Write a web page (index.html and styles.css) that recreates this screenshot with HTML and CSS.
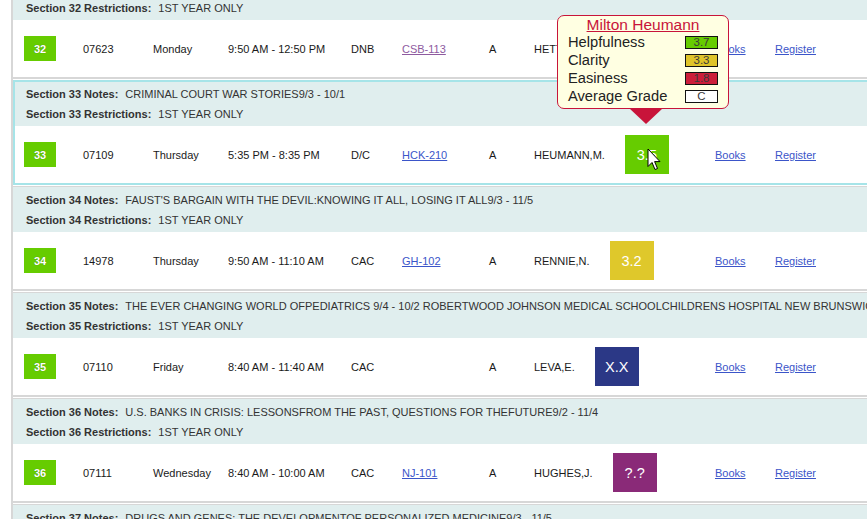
FILE: index.html
```html
<!DOCTYPE html>
<html>
<head>
<meta charset="utf-8">
<title>Sections</title>
<link rel="stylesheet" href="styles.css">
</head>
<body>
<div class="wrap">
  <div class="section">
    <div class="notes first">
      <div class="line"><b>Section 32 Restrictions:</b><span>1ST YEAR ONLY</span></div>
    </div>
    <div class="row">
      <span class="badge">32</span>
      <span>07623</span>
      <span>Monday</span>
      <span>9:50 AM - 12:50 PM</span>
      <span>DNB</span>
      <span><a class="visited" href="#">CSB-113</a></span>
      <span>A</span>
      <span class="inst">HETTLEMAN,K.</span>
      <span><a href="#">Books</a></span>
      <span><a href="#">Register</a></span>
    </div>
  </div>

  <div class="section hover">
    <div class="notes">
      <div class="line"><b>Section 33 Notes:</b><span>CRIMINAL COURT WAR STORIES9/3 - 10/1</span></div>
      <div class="line"><b>Section 33 Restrictions:</b><span>1ST YEAR ONLY</span></div>
    </div>
    <div class="row">
      <span class="badge">33</span>
      <span>07109</span>
      <span>Thursday</span>
      <span>5:35 PM - 8:35 PM</span>
      <span>D/C</span>
      <span><a href="#">HCK-210</a></span>
      <span>A</span>
      <span class="inst">HEUMANN,M.<span class="rating green">3.5</span></span>
      <span><a href="#">Books</a></span>
      <span><a href="#">Register</a></span>
    </div>
  </div>

  <div class="section">
    <div class="notes">
      <div class="line"><b>Section 34 Notes:</b><span>FAUST'S BARGAIN WITH THE DEVIL:KNOWING IT ALL, LOSING IT ALL9/3 - 11/5</span></div>
      <div class="line"><b>Section 34 Restrictions:</b><span>1ST YEAR ONLY</span></div>
    </div>
    <div class="row">
      <span class="badge">34</span>
      <span>14978</span>
      <span>Thursday</span>
      <span>9:50 AM - 11:10 AM</span>
      <span>CAC</span>
      <span><a href="#">GH-102</a></span>
      <span>A</span>
      <span class="inst">RENNIE,N.<span class="rating yellow">3.2</span></span>
      <span><a href="#">Books</a></span>
      <span><a href="#">Register</a></span>
    </div>
  </div>

  <div class="section">
    <div class="notes">
      <div class="line"><b>Section 35 Notes:</b><span>THE EVER CHANGING WORLD OFPEDIATRICS 9/4 - 10/2 ROBERTWOOD JOHNSON MEDICAL SCHOOLCHILDRENS HOSPITAL NEW BRUNSWICK</span></div>
      <div class="line"><b>Section 35 Restrictions:</b><span>1ST YEAR ONLY</span></div>
    </div>
    <div class="row">
      <span class="badge">35</span>
      <span>07110</span>
      <span>Friday</span>
      <span>8:40 AM - 11:40 AM</span>
      <span>CAC</span>
      <span></span>
      <span>A</span>
      <span class="inst">LEVA,E.<span class="rating navy">X.X</span></span>
      <span><a href="#">Books</a></span>
      <span><a href="#">Register</a></span>
    </div>
  </div>

  <div class="section">
    <div class="notes">
      <div class="line"><b>Section 36 Notes:</b><span>U.S. BANKS IN CRISIS: LESSONSFROM THE PAST, QUESTIONS FOR THEFUTURE9/2 - 11/4</span></div>
      <div class="line"><b>Section 36 Restrictions:</b><span>1ST YEAR ONLY</span></div>
    </div>
    <div class="row">
      <span class="badge">36</span>
      <span>07111</span>
      <span>Wednesday</span>
      <span>8:40 AM - 10:00 AM</span>
      <span>CAC</span>
      <span><a href="#">NJ-101</a></span>
      <span>A</span>
      <span class="inst">HUGHES,J.<span class="rating purple">?.?</span></span>
      <span><a href="#">Books</a></span>
      <span><a href="#">Register</a></span>
    </div>
  </div>

  <div class="section">
    <div class="notes">
      <div class="line"><b>Section 37 Notes:</b><span>DRUGS AND GENES: THE DEVELOPMENTOF PERSONALIZED MEDICINE9/3 - 11/5</span></div>
      <div class="line"><b>Section 37 Restrictions:</b><span>1ST YEAR ONLY</span></div>
    </div>
  </div>
</div>

<div class="tip">
  <a class="tip-title" href="#">Milton Heumann</a>
  <div class="tip-row"><span>Helpfulness</span><span class="val green">3.7</span></div>
  <div class="tip-row"><span>Clarity</span><span class="val yellow">3.3</span></div>
  <div class="tip-row"><span>Easiness</span><span class="val red">1.8</span></div>
  <div class="tip-row"><span>Average Grade</span><span class="val white">C</span></div>
  <span class="tip-arrow"></span>
</div>

<svg class="cursor" width="14" height="24" viewBox="0 0 14 24">
  <path d="M1 1 L1 18.5 L5 14.5 L8 21.5 L10.5 20.5 L7.6 13.6 L13 13.6 Z" fill="#fff" stroke="#000" stroke-width="1" stroke-linejoin="round"/>
</svg>
</body>
</html>
```

FILE: styles.css
```css
html, body {
  margin: 0;
  padding: 0;
  background: #fff;
  overflow: hidden;
}
body {
  font-family: Arial, "Liberation Sans", sans-serif;
  font-size: 11px;
  color: #222;
  position: relative;
  width: 867px;
  height: 519px;
}
.wrap {
  margin-left: 11px;
  margin-top: -5px;
  width: 1000px;
  border-left: 2px solid #d7d7d7;
}
.section {
  border-bottom: 2px solid #d7d7d7;
}
.section + .section {
  margin-top: 1px;
  border-top: 1px solid #d7d7d7;
}
.section.hover {
  outline: 2px solid #a6e4e8;
  outline-offset: -2px;
}
.notes {
  background: #e0eeee;
  padding: 3px 0 2px 13px;
  color: #333;
}
.line {
  height: 20px;
  line-height: 20px;
  white-space: nowrap;
}
.line b {
  font-weight: bold;
  margin-right: 7px;
}
.row {
  background: #fff;
  height: 57px;
  display: grid;
  grid-template-columns: 59px 70px 75px 123px 51px 87px 45px 181px 60px 100px;
  align-items: center;
  padding-left: 11px;
  color: #1a1a1a;
}
.badge {
  width: 32px;
  height: 25px;
  background: #66cc00;
  color: #fff;
  font-weight: bold;
  display: flex;
  align-items: center;
  justify-content: center;
  text-shadow: 0 0 1px rgba(0, 0, 0, 0.35);
}
.inst {
  display: flex;
  align-items: center;
  white-space: nowrap;
}
.rating {
  margin-left: 20px;
  width: 44px;
  height: 39px;
  color: #fff;
  font-size: 14.5px;
  display: flex;
  align-items: center;
  justify-content: center;
}
.rating.green { background: #66cc00; }
.rating.yellow { background: #dfc82b; }
.rating.navy { background: #2b3886; }
.rating.purple { background: #8a2a78; }
a {
  color: #3b55c9;
  text-decoration: underline;
}
a.visited {
  color: #8e5b9f;
}
.tip {
  position: absolute;
  left: 557px;
  top: 15px;
  width: 172px;
  height: 94px;
  box-sizing: border-box;
  background: #ffffe2;
  border: 1px solid #c8143a;
  border-radius: 7px;
  padding: 0 10px;
  font-size: 14.7px;
  color: #222;
  display: flex;
  flex-direction: column;
  z-index: 5;
}
.tip-title {
  color: #c8143a;
  font-size: 15.5px;
  text-align: center;
  line-height: 18px;
  height: 17px;
}
.tip-row {
  display: flex;
  justify-content: space-between;
  align-items: center;
  height: 18px;
  line-height: 18px;
}
.val {
  width: 33px;
  height: 13px;
  border: 1px solid #111;
  box-sizing: border-box;
  font-size: 11.5px;
  line-height: 11px;
  text-align: center;
  color: #3a3a3a;
}
.val.green { background: #66cc00; }
.val.yellow { background: #dfc42a; }
.val.red { background: #cc1e3a; }
.val.white { background: #fff; }
.tip-arrow {
  position: absolute;
  left: 71px;
  top: 92px;
  width: 0;
  height: 0;
  border-left: 17px solid transparent;
  border-right: 17px solid transparent;
  border-top: 16px solid #c8143a;
}
.cursor {
  position: absolute;
  left: 647px;
  top: 148px;
  z-index: 6;
}
```
